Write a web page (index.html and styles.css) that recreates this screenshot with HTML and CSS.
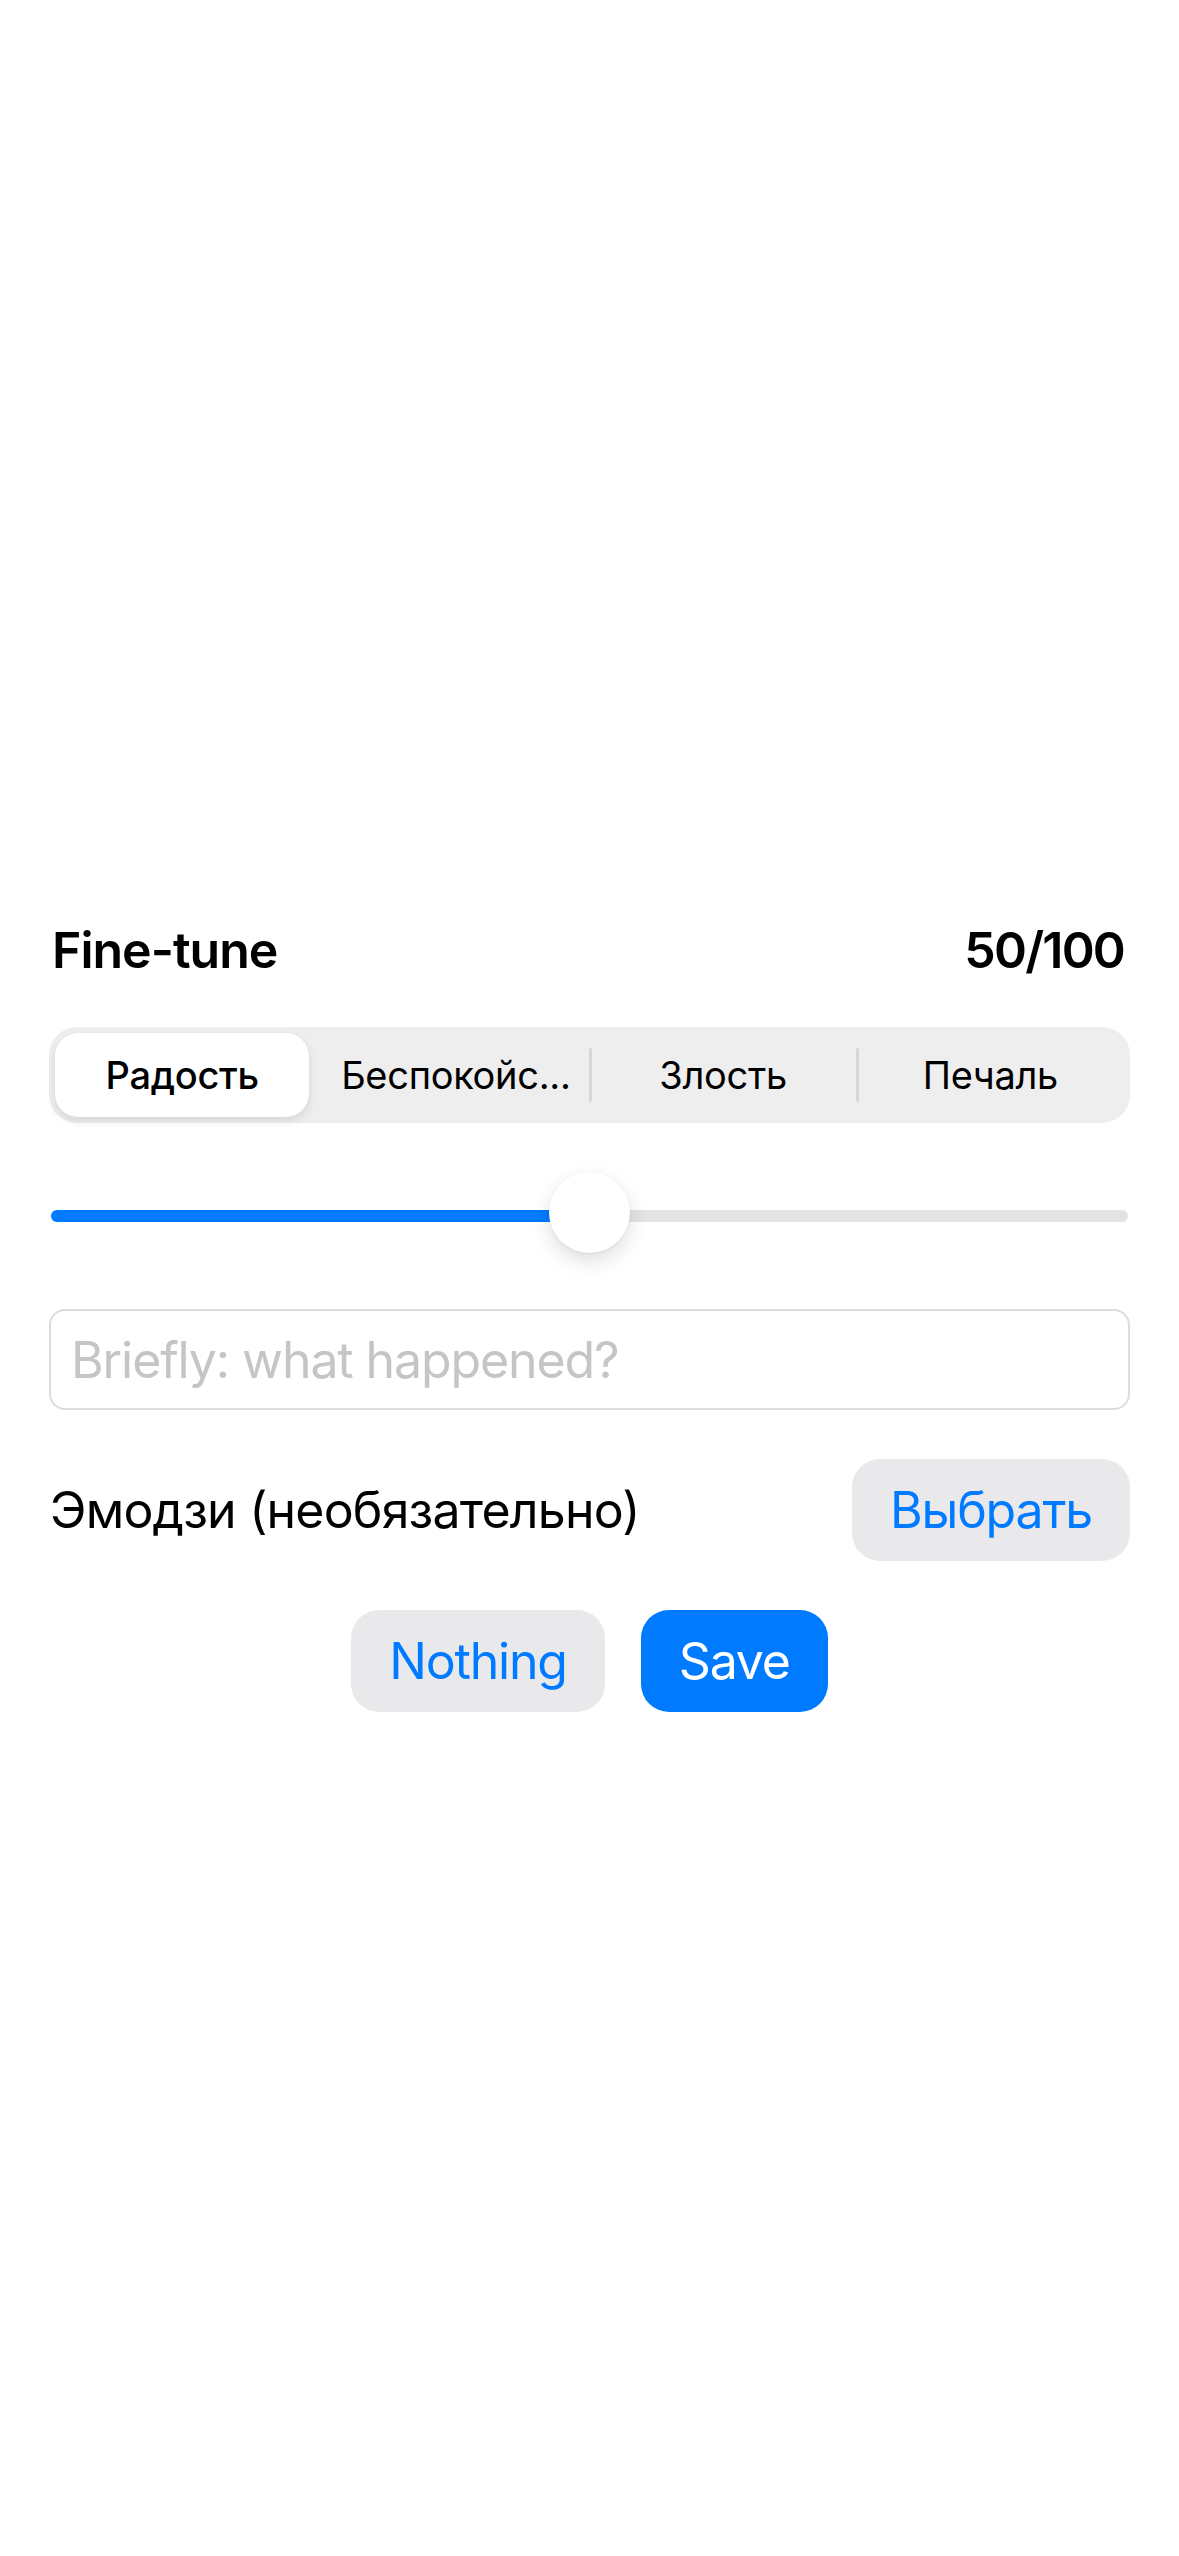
FILE: index.html
```html
<!DOCTYPE html>
<html lang="ru">
<head>
<meta charset="utf-8">
<title>Fine-tune</title>
<link rel="stylesheet" href="styles.css">
</head>
<body>
<main class="sheet">
  <div class="header">
    <span class="title">Fine-tune</span>
    <span class="value">50/100</span>
  </div>

  <div class="segmented">
    <div class="seg active">Радость</div>
    <div class="seg">Беспокойс...</div>
    <div class="seg divided">Злость</div>
    <div class="seg divided">Печаль</div>
  </div>

  <div class="slider">
    <div class="track">
      <div class="fill" style="width:50%"></div>
      <div class="thumb" style="left:50%"></div>
    </div>
  </div>

  <div class="field">
    <span class="placeholder">Briefly: what happened?</span>
  </div>

  <div class="emoji-row">
    <span class="label">Эмодзи (необязательно)</span>
    <button class="btn btn-gray">Выбрать</button>
  </div>

  <div class="actions">
    <button class="btn btn-gray">Nothing</button>
    <button class="btn btn-blue">Save</button>
  </div>
</main>
</body>
</html>
```

FILE: styles.css
```css
* { box-sizing: border-box; }

html, body {
  margin: 0;
  padding: 0;
  background: #ffffff;
}

body {
  width: 1179px;
  height: 2556px;
  font-family: Inter, "Noto Sans", sans-serif;
  color: #000;
}

.sheet {
  padding: 920px 49px 0 49px;
  display: flex;
  flex-direction: column;
}

.header {
  display: flex;
  justify-content: space-between;
  align-items: center;
  height: 60px;
  line-height: 60px;
  font-size: 50px;
  font-weight: 600;
  letter-spacing: -1px;
  padding: 0 6px 0 3px;
}

.header .value {
  letter-spacing: -1.8px;
}

.segmented {
  margin-top: 47px;
  height: 96px;
  background: #eeeeef;
  border-radius: 28px;
  padding: 6px;
  display: grid;
  grid-template-columns: repeat(4, 1fr);
}

.seg {
  position: relative;
  display: flex;
  align-items: center;
  justify-content: center;
  font-size: 38px;
  font-weight: 400;
  letter-spacing: -0.3px;
  color: #000;
  white-space: nowrap;
}

.seg.active {
  margin-right: 13px;
  background: #ffffff;
  border-radius: 23px;
  font-weight: 500;
  box-shadow: 0 4px 10px rgba(0, 0, 0, 0.10), 0 0 1px rgba(0, 0, 0, 0.08);
}

.seg.divided::before {
  content: "";
  position: absolute;
  left: -1px;
  top: 15px;
  bottom: 15px;
  width: 3px;
  border-radius: 2px;
  background: #d6d6d8;
}

.slider {
  margin-top: 48px;
  height: 82px;
  display: flex;
  align-items: center;
  padding: 8px 2px 0 2px;
}

.track {
  position: relative;
  width: 100%;
  height: 12px;
  border-radius: 6px;
  background: #e3e3e6;
}

.fill {
  height: 100%;
  border-radius: 6px 0 0 6px;
  background: #007aff;
}

.thumb {
  position: absolute;
  top: calc(50% - 4px);
  width: 81px;
  height: 81px;
  margin: -40.5px 0 0 -40.5px;
  border-radius: 50%;
  background: #ffffff;
  box-shadow: 0 8px 20px rgba(0, 0, 0, 0.13), 0 1px 3px rgba(0, 0, 0, 0.06);
}

.field {
  margin-top: 56px;
  height: 101px;
  border: 2px solid #dcdcde;
  border-radius: 16px;
  display: flex;
  align-items: center;
  padding: 0 20px;
}

.placeholder {
  font-size: 50px;
  color: #c5c5c7;
  letter-spacing: -1.1px;
}

.emoji-row {
  margin-top: 49px;
  display: flex;
  justify-content: space-between;
  align-items: center;
}

.label {
  font-size: 50px;
  letter-spacing: -0.8px;
  padding-left: 1px;
}

.btn {
  height: 102px;
  border: none;
  border-radius: 28px;
  padding: 0 38px;
  font-family: Inter, "Noto Sans", sans-serif;
  font-size: 50px;
  font-weight: 400;
  letter-spacing: -1.2px;
  cursor: pointer;
}

.btn-gray {
  background: #e9e9eb;
  color: #007aff;
}

.btn-blue {
  background: #007aff;
  color: #ffffff;
}

.actions {
  margin-top: 49px;
  display: flex;
  justify-content: center;
  gap: 36px;
}
```
